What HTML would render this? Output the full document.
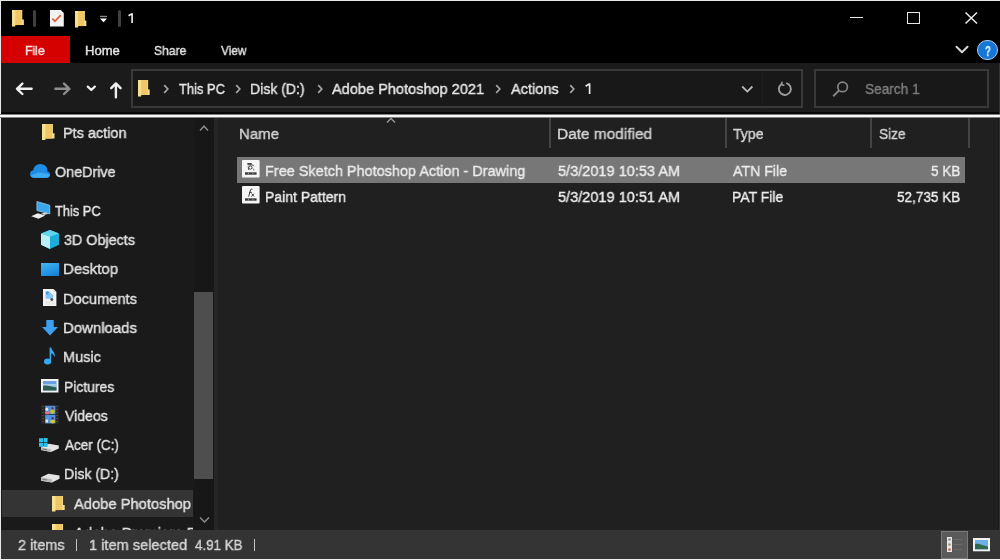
<!DOCTYPE html>
<html><head><meta charset="utf-8">
<style>
*{margin:0;padding:0;box-sizing:border-box}
html,body{width:1000px;height:560px;overflow:hidden;background:#000}
body{position:relative;font-family:"Liberation Sans",sans-serif;color:#fff}
.a{position:absolute}
.t{position:absolute;white-space:pre;line-height:1;transform-origin:0 0;will-change:transform;-webkit-text-stroke-width:0.4px}
svg{position:absolute;overflow:visible}
</style></head><body>
<div class="a" style="left:1px;top:63px;width:999px;height:51px;background:#1b1b1b"></div>
<div class="a" style="left:0;top:112px;width:1000px;height:1.6px;background:#070707"></div>
<div class="a" style="left:1px;top:117px;width:213px;height:413px;background:#1a1a1a"></div>
<div class="a" style="left:214px;top:118px;width:3.5px;height:412px;background:#262626"></div>
<div class="a" style="left:218px;top:117px;width:780px;height:413px;background:#202020"></div>
<div class="a" style="left:998px;top:117px;width:1px;height:413px;background:#1a1a1a"></div>
<div class="a" style="left:999px;top:63px;width:1px;height:497px;background:#333"></div>
<div class="a" style="left:1px;top:530px;width:998px;height:29px;background:#343434"></div>
<div class="a" style="left:0;top:0;width:1000px;height:1px;background:#e8e8e8"></div>
<div class="a" style="left:0;top:0;width:1px;height:560px;background:#e8e8e8"></div>
<div class="a" style="left:0;top:558.5px;width:1000px;height:1.5px;background:#f0f0f0"></div>
<div class="a" style="left:0;top:113.5px;width:1000px;height:4.5px;background:linear-gradient(#1b1b1b 0%,#f2f2f2 28%,#ffffff 50%,#f2f2f2 72%,#202020 100%)"></div>
<svg style="left:11.5px;top:9.6px" width="12.3" height="16.6" viewBox="0 0 13.5 16.5" preserveAspectRatio="none">
<path d="M0 0H11.3V9.5H13V15H3.6V16.5H0Z" fill="#f7e08e"/><path d="M3.6 0H10.6V15H3.6Z" fill="#efc766"/></svg>
<div class="a" style="left:33.3px;top:10px;width:2.6px;height:17px;background:#404040;border-radius:2px"></div>
<svg style="left:49.7px;top:10.2px" width="13.8" height="16.6" viewBox="0 0 14 16.6" preserveAspectRatio="none">
<path d="M0 0H11L14 3V16.6H0Z" fill="#f2f2f2"/><path d="M2.3 8.6L5 11.2L11 5.2" stroke="#e0633f" stroke-width="1.8" fill="none"/></svg>
<svg style="left:75px;top:10.7px" width="11.8" height="16.6" viewBox="0 0 13.5 16.5" preserveAspectRatio="none">
<path d="M0 0H11.3V9.5H13V15H3.6V16.5H0Z" fill="#f7e08e"/><path d="M3.6 0H10.6V15H3.6Z" fill="#efc766"/></svg>
<svg style="left:99px;top:15px" width="9" height="8" viewBox="0 0 9 8">
<rect x="1" y="0.8" width="7" height="1.3" fill="#8a8a8a"/><path d="M1 3.5H8L4.5 7.2Z" fill="#fff"/></svg>
<div class="a" style="left:118.2px;top:10px;width:2.6px;height:17px;background:#404040;border-radius:2px"></div>
<svg style="left:127.6px;top:13px" width="5.5" height="10" viewBox="0 0 5.5 10"><path d="M4.1 0.2V10M4.1 0.6L0.5 2.8" stroke="#f2f2f2" stroke-width="1.6" fill="none"/></svg>
<div class="a" style="left:850px;top:16.8px;width:12.5px;height:1.5px;background:#e8e8e8"></div>
<div class="a" style="left:907px;top:12px;width:12.5px;height:12px;border:1.4px solid #e8e8e8"></div>
<svg style="left:964.5px;top:12px" width="12.5" height="12" viewBox="0 0 12.5 12">
<path d="M0.5 0.5L12 11.5M12 0.5L0.5 11.5" stroke="#ececec" stroke-width="1.5"/></svg>
<div class="a" style="left:1px;top:36px;width:68.6px;height:27px;background:#d50000"></div>
<div class="t" style="left:24.56px;top:44.00px;font-size:13px;color:#ffe4e4;transform:scaleX(0.9383);">File</div>
<div class="t" style="left:85.00px;top:44.00px;font-size:13px;color:#e2e2e2;transform:scaleX(1.0046);">Home</div>
<div class="t" style="left:154.00px;top:44.00px;font-size:13px;color:#e2e2e2;transform:scaleX(0.9286);">Share</div>
<div class="t" style="left:221.00px;top:44.00px;font-size:13px;color:#e2e2e2;transform:scaleX(0.9105);">View</div>
<svg style="left:955px;top:45px" width="14" height="9" viewBox="0 0 14 9">
<path d="M1.5 1.8L7 7.2L12.5 1.8" stroke="#d4d4d4" stroke-width="2.1" fill="none" stroke-linecap="round" stroke-linejoin="round"/></svg>
<div class="a" style="left:977px;top:39.8px;width:20.5px;height:20.5px;border-radius:50%;background:#1576d6;border:1.6px solid #a9cdee"></div>
<div class="t" style="left:985.40px;top:43.63px;font-size:14.5px;color:#cfe9ff;transform:scaleX(0.6625);font-weight:bold">?</div>
<svg style="left:15px;top:82px" width="18" height="14" viewBox="0 0 18 14">
<path d="M2 6.8H16.6M7.4 1.6L2 6.8L7.4 12" stroke="#efefef" stroke-width="2.4" fill="none" stroke-linecap="round" stroke-linejoin="round"/></svg>
<svg style="left:53px;top:82px" width="18" height="14" viewBox="0 0 18 14">
<path d="M2.4 6.8H16.2M11 1.6L16.4 6.8L11 12" stroke="#8e8e8e" stroke-width="2.4" fill="none" stroke-linecap="round" stroke-linejoin="round"/></svg>
<svg style="left:86px;top:85px" width="11" height="8" viewBox="0 0 11 8">
<path d="M1.8 1.6L5.3 5L8.8 1.6" stroke="#efefef" stroke-width="2.3" fill="none" stroke-linecap="round" stroke-linejoin="round"/></svg>
<svg style="left:110px;top:81px" width="14" height="18" viewBox="0 0 14 18">
<path d="M5.9 16.2V2.6M1.2 7.2L5.9 2.4L10.6 7.2" stroke="#efefef" stroke-width="2.4" fill="none" stroke-linecap="round" stroke-linejoin="round"/></svg>
<div class="a" style="left:131px;top:69.2px;width:672.4px;height:38.8px;border:2px solid #393939;background:#181818"></div>
<div class="a" style="left:762px;top:71.2px;width:1px;height:34.8px;background:#1e1e1e"></div>
<svg style="left:137.7px;top:80px" width="12.1" height="16.4" viewBox="0 0 13.5 16.5" preserveAspectRatio="none">
<path d="M0 0H11.3V9.5H13V15H3.6V16.5H0Z" fill="#f7e08e"/><path d="M3.6 0H10.6V15H3.6Z" fill="#efc766"/></svg>
<svg style="left:163px;top:83.5px" width="6" height="10" viewBox="0 0 6 10"><path d="M1.2 1.2L4.8 5L1.2 8.8" stroke="#a4a4a4" stroke-width="1.7" fill="none"/></svg>
<div class="t" style="left:178.80px;top:80.68px;font-size:15.5px;color:#e6e6e6;transform:scaleX(0.8338);">This PC</div>
<svg style="left:235px;top:83.5px" width="6" height="10" viewBox="0 0 6 10"><path d="M1.2 1.2L4.8 5L1.2 8.8" stroke="#a4a4a4" stroke-width="1.7" fill="none"/></svg>
<div class="t" style="left:250.49px;top:80.68px;font-size:15.5px;color:#e6e6e6;transform:scaleX(0.9069);">Disk (D:)</div>
<svg style="left:316.6px;top:83.5px" width="6" height="10" viewBox="0 0 6 10"><path d="M1.2 1.2L4.8 5L1.2 8.8" stroke="#a4a4a4" stroke-width="1.7" fill="none"/></svg>
<div class="t" style="left:332.00px;top:80.68px;font-size:15.5px;color:#e6e6e6;transform:scaleX(0.9386);">Adobe Photoshop 2021</div>
<svg style="left:494.6px;top:83.5px" width="6" height="10" viewBox="0 0 6 10"><path d="M1.2 1.2L4.8 5L1.2 8.8" stroke="#a4a4a4" stroke-width="1.7" fill="none"/></svg>
<div class="t" style="left:510.50px;top:80.68px;font-size:15.5px;color:#e6e6e6;transform:scaleX(0.9397);">Actions</div>
<svg style="left:569px;top:83.5px" width="6" height="10" viewBox="0 0 6 10"><path d="M1.2 1.2L4.8 5L1.2 8.8" stroke="#a4a4a4" stroke-width="1.7" fill="none"/></svg>
<svg style="left:585px;top:83px" width="6.5" height="11" viewBox="0 0 6.5 11"><path d="M4.6 0.3V11M4.6 0.8L0.6 3.2" stroke="#e6e6e6" stroke-width="1.7" fill="none"/></svg>
<svg style="left:740.5px;top:85px" width="13" height="9" viewBox="0 0 13 9">
<path d="M1.2 1.5L6.3 6.6L11.4 1.5" stroke="#b8b8b8" stroke-width="1.8" fill="none"/></svg>
<svg style="left:776.5px;top:81px" width="16" height="16" viewBox="0 0 16 16">
<path d="M4.2 3.2A6 6 0 1 0 9.2 2.1" stroke="#9c9c9c" stroke-width="1.9" fill="none"/>
<path d="M5.2 0.6L4.4 3.5L7.4 4.6" stroke="#9c9c9c" stroke-width="1.6" fill="none"/></svg>
<div class="a" style="left:814.3px;top:69.3px;width:174.7px;height:38.7px;border:2px solid #393939;background:#181818"></div>
<svg style="left:832px;top:81px" width="17" height="16" viewBox="0 0 17 16">
<circle cx="10.6" cy="5.9" r="4.8" stroke="#858585" stroke-width="1.7" fill="none"/>
<path d="M7.2 9.3L1.2 15.2" stroke="#858585" stroke-width="1.9"/></svg>
<div class="t" style="left:864.50px;top:80.68px;font-size:15.5px;color:#7c7c7c;transform:scaleX(0.8809);">Search 1</div>
<div class="a" style="left:2px;top:489.6px;width:191px;height:27.4px;background:#343434"></div>
<div class="a" style="left:194px;top:118px;width:20px;height:412px;background:#171717"></div>
<div class="a" style="left:194.3px;top:292px;width:18.7px;height:187px;background:#4e4e4e"></div>
<svg style="left:199px;top:124px" width="10" height="8" viewBox="0 0 10 8">
<path d="M1 6.5L5 2.2L9 6.5" stroke="#8a8a8a" stroke-width="1.5" fill="none"/></svg>
<svg style="left:199px;top:516px" width="11" height="8" viewBox="0 0 11 8">
<path d="M1 1.5L5.5 6L10 1.5" stroke="#8a8a8a" stroke-width="1.5" fill="none"/></svg>
<svg style="left:42px;top:124px" width="13" height="16" viewBox="0 0 13.5 16.5" preserveAspectRatio="none">
<path d="M0 0H11.3V9.5H13V15H3.6V16.5H0Z" fill="#f7e08e"/><path d="M3.6 0H10.6V15H3.6Z" fill="#efc766"/></svg>
<div class="t" style="left:63.47px;top:124.88px;font-size:15.5px;color:#e2e2e2;transform:scaleX(0.9331);">Pts action</div>
<svg style="left:30px;top:163.6px" width="20" height="13.8" viewBox="0 0 20 13.8">
<g fill="#1f8de6"><ellipse cx="10.4" cy="6.2" rx="7" ry="6.2"/><circle cx="3.9" cy="10" r="3.8"/><circle cx="16.7" cy="10.6" r="3.2"/><rect x="4" y="8" width="12.6" height="5.8"/></g>
<path d="M0.6 11.5L9 8.4L19.8 10.2A3.2 3.2 0 0 1 16.6 13.8H4A3.8 3.8 0 0 1 0.6 11.5Z" fill="#3cacf4"/></svg>
<div class="t" style="left:55.00px;top:163.88px;font-size:15.5px;color:#e2e2e2;transform:scaleX(0.9253);">OneDrive</div>
<svg style="left:31px;top:201.4px" width="19" height="18" viewBox="0 0 19 18">
<path d="M5.9 0.5L18.8 4.3V12.9L5.9 9.5Z" fill="#3aa6ec" stroke="#9fd6f6" stroke-width="0.7"/>
<path d="M0.2 15.3L6.8 12.2L14.2 14.4L7.6 17.8Z" fill="#ececec"/><path d="M10 12.6L14.5 11.6L17.5 12.8L13.2 13.9Z" fill="#d0d0d0"/></svg>
<div class="t" style="left:55.00px;top:203.08px;font-size:15.5px;color:#e2e2e2;transform:scaleX(0.8284);">This PC</div>
<svg style="left:40.7px;top:230.2px" width="18" height="19" viewBox="0 0 18 19">
<path d="M9 0L18 3.4V14.8L9 19L0 14.8V3.4Z" fill="#1aaed9"/>
<path d="M0 3.4L9 6.6V19L0 14.8Z" fill="#b8eef8"/>
<path d="M9 0L18 3.4L9 6.6L0 3.4Z" fill="#62d4ec"/></svg>
<div class="t" style="left:64.40px;top:232.08px;font-size:15.5px;color:#e2e2e2;transform:scaleX(0.9257);">3D Objects</div>
<div class="a" style="left:41px;top:263px;width:18px;height:12.5px;background:linear-gradient(160deg,#45b4f4,#1f8fe0 70%,#1a78c8)"></div>
<div class="t" style="left:63.43px;top:261.28px;font-size:15.5px;color:#e2e2e2;transform:scaleX(0.9703);">Desktop</div>
<svg style="left:43.1px;top:289.3px" width="13.4" height="17" viewBox="0 0 13.4 17">
<path d="M0 0H10.4L13.4 3V17H0Z" fill="#f3f3f3"/><path d="M10.4 0V3H13.4Z" fill="#d8d8d8"/>
<path d="M2.6 2.2H6.2L8.2 4.5L10.5 6.5L10 9.8H2.6Z" fill="#86c6f0"/><path d="M3 2.6H5.6V5.5H3Z" fill="#3d9ae0"/>
<circle cx="8.8" cy="10.6" r="1.5" fill="#4a5060"/>
<rect x="2" y="12.6" width="9.4" height="0.8" fill="#e6d2d2"/><rect x="2" y="14.6" width="9.4" height="0.8" fill="#dcdcdc"/></svg>
<div class="t" style="left:63.46px;top:290.58px;font-size:15.5px;color:#e2e2e2;transform:scaleX(0.9428);">Documents</div>
<svg style="left:42px;top:320px" width="16" height="15.5" viewBox="0 0 16 15.5">
<path d="M4.3 0H11.7V7H16L8 15.5L0 7H4.3Z" fill="#3d9ff0"/></svg>
<div class="t" style="left:63.44px;top:319.88px;font-size:15.5px;color:#e2e2e2;transform:scaleX(0.9640);">Downloads</div>
<svg style="left:43.5px;top:347px" width="12" height="18" viewBox="0 0 12 18">
<ellipse cx="3.6" cy="14.6" rx="3.6" ry="3" fill="#35a8ee"/><path d="M5.6 14.5V0.5H7.2C7.5 3.5 12 5.5 10.5 10.5C10 8 8.5 6.5 7.2 6.5V14.5Z" fill="#35a8ee"/></svg>
<div class="t" style="left:63.46px;top:349.28px;font-size:15.5px;color:#e2e2e2;transform:scaleX(0.9364);">Music</div>
<svg style="left:41px;top:379px" width="17.5" height="13.5" viewBox="0 0 17.5 13.5">
<rect width="17.5" height="13.5" fill="#f2f2f2"/><rect x="2" y="2" width="13.5" height="9.5" fill="#6aa2e0"/><rect x="2" y="5" width="13.5" height="2.5" fill="#a8cce0"/>
<path d="M2 7C6 5.5 10 8 15.5 8.5V11.5H2Z" fill="#2f5c50"/></svg>
<div class="t" style="left:63.50px;top:378.88px;font-size:15.5px;color:#e2e2e2;transform:scaleX(0.8979);">Pictures</div>
<svg style="left:40.7px;top:405px" width="18" height="19" viewBox="0 0 18 19">
<rect width="18" height="19" fill="#262626"/>
<g fill="#444"><rect x="1" y="1" width="2" height="1"/><rect x="1" y="4" width="2" height="1"/><rect x="1" y="7" width="2" height="1"/><rect x="1" y="10" width="2" height="1"/><rect x="1" y="13" width="2" height="1"/><rect x="1" y="16" width="2" height="1"/>
<rect x="15" y="1" width="2" height="1"/><rect x="15" y="4" width="2" height="1"/><rect x="15" y="7" width="2" height="1"/><rect x="15" y="10" width="2" height="1"/><rect x="15" y="13" width="2" height="1"/><rect x="15" y="16" width="2" height="1"/></g>
<rect x="4.2" y="0.8" width="10.2" height="8.4" fill="#4f93e2"/><rect x="4.2" y="10" width="10.2" height="8.4" fill="#4f93e2"/>
<ellipse cx="5.8" cy="4.2" rx="1.4" ry="1.8" fill="#dfe8f4"/><rect x="4.2" y="6.6" width="3.8" height="2.6" fill="#e07080"/>
<ellipse cx="11.4" cy="6.6" rx="2.3" ry="2.4" fill="#c8c020"/><circle cx="11.4" cy="3.2" r="1.3" fill="#7a3a3a"/>
<ellipse cx="5.8" cy="16" rx="1.4" ry="1.8" fill="#dfe8f4"/><ellipse cx="11.6" cy="16.6" rx="2.6" ry="1.8" fill="#d8c828"/><circle cx="11.6" cy="13.3" r="1.3" fill="#4a3a6a"/></svg>
<div class="t" style="left:65.00px;top:407.88px;font-size:15.5px;color:#e2e2e2;transform:scaleX(0.9079);">Videos</div>
<svg style="left:39.4px;top:438.3px" width="20" height="14" viewBox="0 0 20 14">
<path d="M2 9.3L10 5.8L19.8 7.6V10.4L12 13.9L2 12Z" fill="#e4e4e4"/><path d="M2 9.3L12 11.2V13.9L2 12Z" fill="#b8b8b8"/><path d="M3.5 11L8 11.8" stroke="#666" stroke-width="0.8"/>
<g fill="#2cbfe9"><rect x="0" y="0.2" width="4" height="4"/><rect x="4.6" y="0" width="4" height="4.2"/><rect x="0" y="4.8" width="4" height="4"/><rect x="4.6" y="4.8" width="4" height="4.2"/></g></svg>
<div class="t" style="left:65.00px;top:437.48px;font-size:15.5px;color:#e2e2e2;transform:scaleX(0.8700);">Acer (C:)</div>
<svg style="left:40.7px;top:471.5px" width="18.5" height="11" viewBox="0 0 18.5 11">
<path d="M0 5.3L7.5 1.8L18.5 3.6V6.8L11 10.6L0 8.8Z" fill="#e4e4e4"/><path d="M0 5.3L11 7.2V10.6L0 8.8Z" fill="#b8b8b8"/><path d="M1.5 7.2L6 8" stroke="#666" stroke-width="0.8"/></svg>
<div class="t" style="left:64.09px;top:466.48px;font-size:15.5px;color:#e2e2e2;transform:scaleX(0.9102);">Disk (D:)</div>
<svg style="left:51.6px;top:495.6px" width="13.2" height="15.5" viewBox="0 0 13.5 16.5" preserveAspectRatio="none">
<path d="M0 0H11.3V9.5H13V15H3.6V16.5H0Z" fill="#f7e08e"/><path d="M3.6 0H10.6V15H3.6Z" fill="#efc766"/></svg>
<div class="t" style="left:74.40px;top:495.88px;font-size:15.5px;color:#e2e2e2;transform:scaleX(0.9493);">Adobe Photoshop</div>
<div class="a" style="left:0;top:517px;width:193px;height:13px;overflow:hidden"><svg style="left:51.6px;top:7px" width="13.2" height="15.5" viewBox="0 0 13.5 16.5" preserveAspectRatio="none">
<path d="M0 0H11.3V9.5H13V15H3.6V16.5H0Z" fill="#f7e08e"/><path d="M3.6 0H10.6V15H3.6Z" fill="#efc766"/></svg>
<div class="t" style="left:74.40px;top:8.18px;font-size:15.5px;color:#e2e2e2;transform:scaleX(0.9699);">Adobe Premiere Pro</div>
</div>
<div class="t" style="left:238.63px;top:125.88px;font-size:15.5px;color:#d4d4d4;transform:scaleX(0.9666);">Name</div>
<div class="t" style="left:556.61px;top:125.88px;font-size:15.5px;color:#d4d4d4;transform:scaleX(0.9935);">Date modified</div>
<div class="t" style="left:732.60px;top:125.88px;font-size:15.5px;color:#d4d4d4;transform:scaleX(0.9096);">Type</div>
<div class="t" style="left:879.00px;top:125.88px;font-size:15.5px;color:#d4d4d4;transform:scaleX(0.8804);">Size</div>
<div class="a" style="left:548.8px;top:118px;width:1.8px;height:30px;background:#444"></div>
<div class="a" style="left:724.8px;top:118px;width:1.8px;height:30px;background:#444"></div>
<div class="a" style="left:870.2px;top:118px;width:1.8px;height:30px;background:#444"></div>
<div class="a" style="left:968.2px;top:118px;width:1.8px;height:30px;background:#444"></div>
<svg style="left:386px;top:117px" width="10" height="6" viewBox="0 0 10 6">
<path d="M1 5.5L5 1.5L9 5.5" stroke="#9a9a9a" stroke-width="1.3" fill="none"/></svg>
<div class="a" style="left:237px;top:157px;width:727.5px;height:25.7px;background:#777"></div>
<svg style="left:242px;top:160px" width="17.6" height="17.4" viewBox="0 0 17.6 17.4">
<rect x="0" y="0" width="17.6" height="17.4" rx="1" fill="#f6f6f6"/><path d="M5.3 3.6H9.6M5.6 4.8H10.4L11.6 6.2" stroke="#2a2a2a" stroke-width="1" fill="none"/><circle cx="8.4" cy="7.6" r="1.6" fill="none" stroke="#333" stroke-width="0.9"/><path d="M6.2 6.4L6.6 10M10.6 8.2C11.8 9 12.2 10 11.6 10.6" stroke="#444" stroke-width="0.8" fill="none"/>
<rect x="3" y="12.3" width="11.6" height="2.4" fill="#3a3a3a"/><rect x="6.3" y="12.6" width="0.7" height="1.8" fill="#bbb"/><rect x="10.6" y="12.6" width="0.7" height="1.8" fill="#bbb"/></svg>
<svg style="left:242px;top:186.4px" width="17.6" height="17.4" viewBox="0 0 17.6 17.4">
<rect x="0" y="0" width="17.6" height="17.4" rx="1" fill="#f6f6f6"/><path d="M6.6 10.6L8.6 3.8C8.8 3.2 9.6 3 10.4 3.4M7.2 6.4H9.8M9.6 7.6L12 10.4M12 7.6L9.4 10.6" stroke="#333" stroke-width="0.95" fill="none"/>
<rect x="3" y="12.3" width="11.6" height="2.4" fill="#3a3a3a"/><rect x="6.3" y="12.6" width="0.7" height="1.8" fill="#bbb"/><rect x="10.6" y="12.6" width="0.7" height="1.8" fill="#bbb"/></svg>
<div class="t" style="left:265.07px;top:162.88px;font-size:15.5px;color:#ececec;transform:scaleX(0.9325);">Free Sketch Photoshop Action - Drawing</div>
<div class="t" style="left:557.60px;top:162.88px;font-size:15.5px;color:#ececec;transform:scaleX(0.9379);">5/3/2019 10:53 AM</div>
<div class="t" style="left:732.50px;top:162.88px;font-size:15.5px;color:#ececec;transform:scaleX(0.9144);">ATN File</div>
<div class="t" style="left:931.00px;top:162.88px;font-size:15.5px;color:#ececec;transform:scaleX(0.8718);">5 KB</div>
<div class="t" style="left:265.10px;top:189.38px;font-size:15.5px;color:#ececec;transform:scaleX(0.9035);">Paint Pattern</div>
<div class="t" style="left:557.60px;top:189.38px;font-size:15.5px;color:#ececec;transform:scaleX(0.9379);">5/3/2019 10:51 AM</div>
<div class="t" style="left:731.60px;top:189.38px;font-size:15.5px;color:#ececec;transform:scaleX(0.9008);">PAT File</div>
<div class="t" style="left:897.00px;top:189.38px;font-size:15.5px;color:#ececec;transform:scaleX(0.8744);">52,735 KB</div>
<div class="t" style="left:17.70px;top:537.18px;font-size:15.5px;color:#d4d4d4;transform:scaleX(0.9321);">2 items</div>
<div class="a" style="left:76.2px;top:538.6px;width:1.3px;height:12.8px;background:#c4c4c4"></div>
<div class="t" style="left:88.76px;top:537.18px;font-size:15.5px;color:#d4d4d4;transform:scaleX(0.9413);">1 item selected</div>
<div class="t" style="left:194.90px;top:537.18px;font-size:15.5px;color:#d4d4d4;transform:scaleX(0.8611);">4.91 KB</div>
<div class="a" style="left:254px;top:538.6px;width:1.3px;height:12.8px;background:#c4c4c4"></div>
<div class="a" style="left:940.5px;top:530.5px;width:27.5px;height:28px;background:#5a5a5a;border:1px solid #7a7a7a"></div>
<svg style="left:946.5px;top:537px" width="16" height="15" viewBox="0 0 16 15">
<rect x="0" y="0" width="5" height="15" fill="#e8e8e8"/><circle cx="2.5" cy="2.5" r="1.3" fill="#888"/><circle cx="2.5" cy="7.5" r="1.3" fill="#9a9a70"/><circle cx="2.5" cy="12.5" r="1.3" fill="#c06060"/>
<rect x="6.5" y="2" width="8.5" height="1" fill="#6a6a6a"/><rect x="6.5" y="7" width="8.5" height="1" fill="#6a6a6a"/><rect x="6.5" y="12" width="8.5" height="1" fill="#6a6a6a"/></svg>
<svg style="left:973px;top:537.7px" width="17" height="13.3" viewBox="0 0 17 13.3">
<rect width="17" height="13.3" fill="#f2f2f2"/><rect x="2" y="2" width="13" height="9.3" fill="#6fb0e8"/>
<path d="M2 6C6 5 10 8 15 8.5V11.3H2Z" fill="#2f6a50"/></svg>
</body></html>
